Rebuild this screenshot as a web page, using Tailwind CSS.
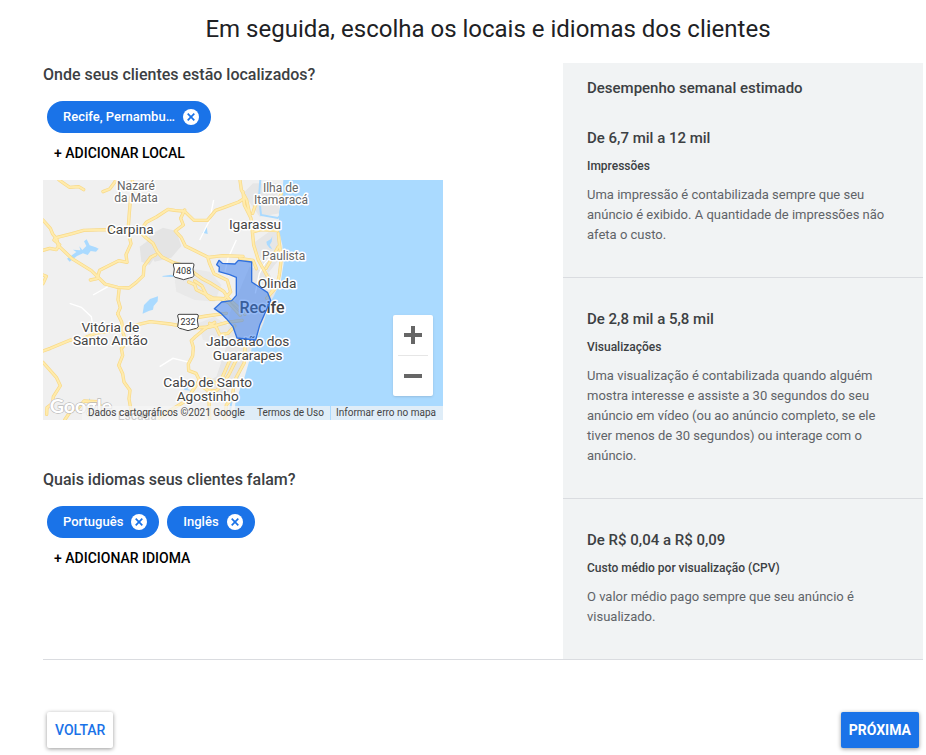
<!DOCTYPE html>
<html lang="pt-BR">
<head>
    <meta charset="UTF-8">
    <meta name="viewport" content="width=device-width, initial-scale=1.0">
    <title>Locais e idiomas</title>
    <script src="https://cdn.jsdelivr.net/npm/@tailwindcss/browser@4"></script>
</head>
<body class="bg-white font-[Roboto,sans-serif] text-[#3c4043]">
    <h1 class="pt-[13px] pb-[18px] pl-[50px] text-center text-2xl leading-8 text-[#202124]">Em seguida, escolha os locais e idiomas dos clientes</h1>

    <main class="ml-[43px] mr-[3px] flex border-b border-[#dadce0]">
        <div class="flex-1">
            <section>
                <h2 class="text-base leading-6 font-medium">Onde seus clientes estão localizados?</h2>
                <div class="flex gap-2 pt-[14px] pl-1">
                    <span class="flex h-8 items-center gap-2 rounded-full bg-[#1a73e8] pr-3 pl-4 text-[13px] font-medium text-white">
                        Recife, Pernambu…
                        <button type="button" aria-label="Remover Recife, Pernambuco">
                            <svg class="block size-4" viewBox="0 0 16 16"><circle cx="8" cy="8" r="8" fill="#fff"/><path d="M4.700 4.700l6.600 6.600M11.300 4.700l-6.600 6.600" stroke="#1a73e8" stroke-width="1.700"/></svg>
                        </button>
                    </span>
                </div>
                <button type="button" class="mt-2 ml-[11px] block text-sm leading-6 font-medium text-black">+ ADICIONAR LOCAL</button>

                <!-- Map -->
                <div class="relative mt-[15px] h-60 w-[400px] overflow-hidden bg-[#f0f0f0]">
                    <svg class="block size-full" viewBox="0 0 1200 720" role="img" aria-label="Mapa de Recife">
                        <rect width="1200" height="720" fill="#f0f0f0"/>
                        <!-- terrain and urban areas -->
                        <g fill="#e4e4e4">
                            <path d="M320 165l40-22 40 10 15 45-30 35-50 12-28-50z"/>
                            <path d="M290 200l35-25 15 50-20 30-25-10z"/>
                            <path d="M395 300l45-35 60 10 35 40-20 50-60-5-55-25z" fill="#e9e9e9"/>
                            <path d="M465 430l50-20 45 30-20 50-60-10z" fill="#e9e9e9"/>
                            <path d="M560 400l60-140 60 20 20 60-40 110-30 60-60 100-50-20 30-90z" fill="#e6e6e6"/>
                            <path d="M480 610l40-20 50 10-20 50-60-10zM600 40l30-30 70 0 10 90-60 10zM630 190l70-50 15 90-40 50z" fill="#e6e6e6"/>
                        </g>
                        <!-- sea -->
                        <path fill="#aadaff" d="M721 0L717 50L708 95L707 150L718 195L722 250L714 300L694 345L680 370L661 430L640 480L626 505L618 545L605 590L590 630L577 670L572 720H1200V0Z"/>
                        <g fill="#aadaff">
                            <path d="M72 236l28-20-10-7 22 2-3-12 9 11 12-12-7-14 8-6 9 18 18 6 9 4-8 9-16-2-9 12-14-5-18 8-22 17z"/>
                            <path d="M478 158l13-18 3 22zM358 288l26-4 20 6-15 1-30-1z"/>
                            <path d="M299 400l4-25 18-18 24-8-1 15-12 14-2 11-13 4-18 8z"/>
                            <path d="M670 185l14-8 4-8-2 16-6 10 8 13-8-4-8-10z"/>
                            <path d="M423 620l18-3-8 9 13 6-22-2zM138 654l4 6-4 4z"/>
                        </g>
                        <path d="M652 0l-4 50 6 55 50 9 14-12M560 700l12-80 25-60" fill="none" stroke="#aadaff" stroke-width="6"/>
                        <!-- minor roads -->
                        <g fill="none" stroke="#fff" stroke-width="4">
                            <path d="M80 370l35 12 30 28 4 24 36 2 10 20M470 180l30-60 12-60M195 320l-45 25M545 280l10-45 25-55M350 560l40-25 50 12M700 215l-35 35-16 30-12 60"/>
                        </g>
                        <!-- main roads -->
                        <g fill="none" stroke-linejoin="round" stroke-linecap="round">
                            <g stroke="#f8d987" stroke-width="10">
                                <path d="M48 0l20 14 12 8 27-2 15 9M180 35l20-8 15-20 5-10M268 0l4 28-9 25-4 45-4 55 9 38-15 33 3 23-25-5-30 15-27 14-8 25-20 4"/>
                                <path d="M290 155l20-28 30-16 35-23 20 3 30 3 28 27 40 0 25-30 24-8 45-17 16-10M0 120l22 25 7 17 12 15 5 20 41 39 58 36 41 40 38 10 34 2 22-17 21-20 2-28 20-27 15-8"/>
                                <path d="M0 211l20-6 20 4 10-15-17-14 6-7 48-12 35-10 65-2 65 3M290 155l15 15 25 20 12 24 15 17 35 17 43 12 20 20 22 16 25 13 40 25 15 22 24 22 25 25"/>
                                <path d="M425 90l-12 25 8 20-24 18 18 20 12 25 32 16 35 17 6 20 13 30 40 20 10 35-18 20-35-2-50-25-5-15-18-8M495 232l45-5 60 2"/>
                                <path d="M455 303l22 15 15 30 10 10 30-2 25 12 35 38M228 330l-3 29 7 24-8 18M0 285l10 4-10 22"/>
                                <path d="M0 513l22-8 60-25 22 2 55-23 60-8 55-15 48-11 60 7 65 12 55-3 50-14 45-6M224 401l12 25 4 32 10 30-15 18 4 20-12 30 12 25 4 25 18 25-3 25 6 35 0 25"/>
                                <path d="M0 547l40 45 12 25-21 33-2 20-17 13-1 20M65 720l20-30 20-5 18-22 40 2 15 20M340 720l35-25 50-30 32-45 12-20-10-20-22-8-1-20 13-25 2-25-6-20 10-10 30-25 30-20"/>
                                <path d="M500 430l20 12 10 22 25-4 20-22M465 610l30 22 25 0 15-15 22-32 20-40 20-25M469 600l30-2 20 12 18-16 22-50 20-22M501 630l-3 30 2 60M545 720l5-45 18-22 6-50 30-55 2-45"/>
                                <path d="M600 35l4 40 20 40 8 80 14 45 25 45 22 40 -20 30M700 20l15 20-5 12M706 160l3 30 6 45-6 50-8 35-30 35M706 200l-25 45-12 20M632 155l22-6 50 3M591 0l4 30 16 30 10 45M639 70l-10 30"/>
                                <path d="M590 235l40 6 10 25M550 400l-60 8-70 12"/>
                            </g>
                            <g stroke="#ffebac" stroke-width="6">
                                <path d="M48 0l20 14 12 8 27-2 15 9M180 35l20-8 15-20 5-10M268 0l4 28-9 25-4 45-4 55 9 38-15 33 3 23-25-5-30 15-27 14-8 25-20 4"/>
                                <path d="M290 155l20-28 30-16 35-23 20 3 30 3 28 27 40 0 25-30 24-8 45-17 16-10M0 120l22 25 7 17 12 15 5 20 41 39 58 36 41 40 38 10 34 2 22-17 21-20 2-28 20-27 15-8"/>
                                <path d="M0 211l20-6 20 4 10-15-17-14 6-7 48-12 35-10 65-2 65 3M290 155l15 15 25 20 12 24 15 17 35 17 43 12 20 20 22 16 25 13 40 25 15 22 24 22 25 25"/>
                                <path d="M425 90l-12 25 8 20-24 18 18 20 12 25 32 16 35 17 6 20 13 30 40 20 10 35-18 20-35-2-50-25-5-15-18-8M495 232l45-5 60 2"/>
                                <path d="M455 303l22 15 15 30 10 10 30-2 25 12 35 38M228 330l-3 29 7 24-8 18M0 285l10 4-10 22"/>
                                <path d="M0 513l22-8 60-25 22 2 55-23 60-8 55-15 48-11 60 7 65 12 55-3 50-14 45-6M224 401l12 25 4 32 10 30-15 18 4 20-12 30 12 25 4 25 18 25-3 25 6 35 0 25"/>
                                <path d="M0 547l40 45 12 25-21 33-2 20-17 13-1 20M65 720l20-30 20-5 18-22 40 2 15 20M340 720l35-25 50-30 32-45 12-20-10-20-22-8-1-20 13-25 2-25-6-20 10-10 30-25 30-20"/>
                                <path d="M500 430l20 12 10 22 25-4 20-22M465 610l30 22 25 0 15-15 22-32 20-40 20-25M469 600l30-2 20 12 18-16 22-50 20-22M501 630l-3 30 2 60M545 720l5-45 18-22 6-50 30-55 2-45"/>
                                <path d="M600 35l4 40 20 40 8 80 14 45 25 45 22 40 -20 30M700 20l15 20-5 12M706 160l3 30 6 45-6 50-8 35-30 35M706 200l-25 45-12 20M632 155l22-6 50 3M591 0l4 30 16 30 10 45M639 70l-10 30"/>
                                <path d="M590 235l40 6 10 25M550 400l-60 8-70 12"/>
                            </g>
                        </g>
                        <!-- road shields -->
                        <g fill="#fff" stroke="#444" stroke-width="3">
                            <path d="M395 250h54q4 0 4 5l-3 12 3 20q-3 6-14 7l-17 5-17-5q-11-1-14-7l3-20-3-12q0-5 4-5z"/>
                            <path d="M408 403h54q4 0 4 5l-3 12 3 20q-3 6-14 7l-17 5-17-5q-11-1-14-7l3-20-3-12q0-5 4-5z"/>
                        </g>
                        <!-- place names -->
                        <g font-family="Roboto, sans-serif" fill="#444" stroke="#fff" stroke-width="9" stroke-linejoin="round" paint-order="stroke" text-anchor="middle">
                            <g font-size="36" fill="#666">
                                <text x="279" y="31">Nazaré</text>
                                <text x="279" y="67">da Mata</text>
                                <text x="713" y="36">Ilha de</text>
                                <text x="714" y="72">Itamaracá</text>
                                <text x="722" y="240">Paulista</text>
                                <text x="283" y="719">Escada</text>
                            </g>
                            <g font-size="41">
                                <text x="262" y="163">Carpina</text>
                                <text x="636" y="147">Igarassu</text>
                                <text x="202" y="456">Vitória de</text>
                                <text x="202" y="495">Santo Antão</text>
                                <text x="702" y="325">Olinda</text>
                                <text x="614" y="499">Jaboatão dos</text>
                                <text x="614" y="541">Guararapes</text>
                                <text x="494" y="621">Cabo de Santo</text>
                                <text x="494" y="663">Agostinho</text>
                            </g>
                            <text x="657" y="400" font-size="48" font-weight="500">Recife</text>
                            <g font-size="27" stroke="none" fill="#333">
                                <text x="422" y="283">408</text>
                                <text x="435" y="436">232</text>
                            </g>
                        </g>
                        <!-- selected area -->
                        <path fill="#2f78ef" fill-opacity=".5" stroke="#2f70de" stroke-width="4" stroke-linejoin="round" d="M521 254l7-13 10 9 38 2 10-11 40 5v60l48 32 9 23-33 75-12 44-56-6-12-34-20-24-16-16-20-14 22-20 30-4 14-16v-54l-20-8-32-9 1-14z"/>
                        <!-- logo -->
                        <text x="20" y="698" font-family="Lato, sans-serif" font-size="59" font-weight="700" fill="#fff" stroke="#bbb" stroke-width="4" paint-order="stroke">Google</text>
                    </svg>
                    <div class="absolute top-[135px] right-[10px] flex w-10 flex-col items-center rounded-xs bg-white shadow">
                        <button type="button" aria-label="Aumentar o zoom" class="flex h-10 w-full items-center justify-center">
                            <svg class="size-[18px]" viewBox="0 0 18 18"><path d="M9 0v18M0 9h18" stroke="#666" stroke-width="4"/></svg>
                        </button>
                        <div class="h-px w-[30px] bg-[#e6e6e6]"></div>
                        <button type="button" aria-label="Diminuir o zoom" class="flex h-10 w-full items-center justify-center">
                            <svg class="size-[18px]" viewBox="0 0 18 18"><path d="M0 9h18" stroke="#666" stroke-width="4"/></svg>
                        </button>
                    </div>
                    <div class="absolute right-0 bottom-0 flex h-[14px] bg-[#f5f5f5]/70 text-[10px] leading-[14px] text-[#444]">
                        <span class="px-[6px]">Dados cartográficos ©2021 Google</span>
                        <a href="#" class="px-[6px]">Termos de Uso</a>
                        <a href="#" class="border-l border-[#aadaff] pr-[7px] pl-[5px]">Informar erro no mapa</a>
                    </div>
                </div>
            </section>

            <section class="pt-12">
                <h2 class="text-base leading-6 font-medium">Quais idiomas seus clientes falam?</h2>
                <div class="flex gap-2 pt-[14px] pl-1">
                    <span class="flex h-8 items-center gap-2 rounded-full bg-[#1a73e8] pr-3 pl-4 text-[13px] font-medium text-white">
                        Português
                        <button type="button" aria-label="Remover Português">
                            <svg class="block size-4" viewBox="0 0 16 16"><circle cx="8" cy="8" r="8" fill="#fff"/><path d="M4.700 4.700l6.600 6.600M11.300 4.700l-6.600 6.600" stroke="#1a73e8" stroke-width="1.700"/></svg>
                        </button>
                    </span>
                    <span class="flex h-8 items-center gap-2 rounded-full bg-[#1a73e8] pr-3 pl-4 text-[13px] font-medium text-white">
                        Inglês
                        <button type="button" aria-label="Remover Inglês">
                            <svg class="block size-4" viewBox="0 0 16 16"><circle cx="8" cy="8" r="8" fill="#fff"/><path d="M4.700 4.700l6.600 6.600M11.300 4.700l-6.600 6.600" stroke="#1a73e8" stroke-width="1.700"/></svg>
                        </button>
                    </span>
                </div>
                <button type="button" class="mt-2 ml-[11px] block text-sm leading-6 font-medium text-black">+ ADICIONAR IDIOMA</button>
            </section>
        </div>

        <!-- Weekly estimates -->
        <aside class="w-[360px] bg-[#f1f3f4]">
            <h2 class="px-6 pt-[13px] text-[15px] leading-6 font-medium">Desempenho semanal estimado</h2>
            <section class="border-b border-[#dadce0] px-6 pt-[26px] pb-8">
                <h3 class="text-[15px] leading-6 font-medium">De 6,7 mil a 12 mil</h3>
                <h4 class="pt-[6px] text-xs leading-5 font-medium">Impressões</h4>
                <p class="pt-[9px] text-[13px] leading-5 text-[#5f6368]">Uma impressão é contabilizada sempre que seu anúncio é exibido. A quantidade de impressões não afeta o custo.</p>
            </section>
            <section class="border-b border-[#dadce0] px-6 pt-[29px] pb-8">
                <h3 class="text-[15px] leading-6 font-medium">De 2,8 mil a 5,8 mil</h3>
                <h4 class="pt-[6px] text-xs leading-5 font-medium">Visualizações</h4>
                <p class="pt-[9px] text-[13px] leading-5 text-[#5f6368]">Uma visualização é contabilizada quando alguém mostra interesse e assiste a 30 segundos do seu anúncio em vídeo (ou ao anúncio completo, se ele tiver menos de 30 segundos) ou interage com o anúncio.</p>
            </section>
            <section class="px-6 pt-[29px] pb-8">
                <h3 class="text-[15px] leading-6 font-medium">De R$ 0,04 a R$ 0,09</h3>
                <h4 class="pt-[6px] text-xs leading-5 font-medium">Custo médio por visualização (CPV)</h4>
                <p class="pt-[9px] text-[13px] leading-5 text-[#5f6368]">O valor médio pago sempre que seu anúncio é visualizado.</p>
            </section>
        </aside>
    </main>

    <footer class="flex justify-between pt-[52px] pr-[7px] pb-[7px] pl-[47px]">
        <button type="button" class="h-9 rounded-xs bg-white px-2 text-sm font-medium text-[#1a73e8] shadow-[0_1px_4px_rgb(0_0_0/0.4)]">VOLTAR</button>
        <button type="button" class="h-9 rounded-xs bg-[#1a73e8] px-2 text-sm font-bold text-white shadow-[0_1px_4px_rgb(0_0_0/0.4)]">PRÓXIMA</button>
    </footer>
</body>
</html>
